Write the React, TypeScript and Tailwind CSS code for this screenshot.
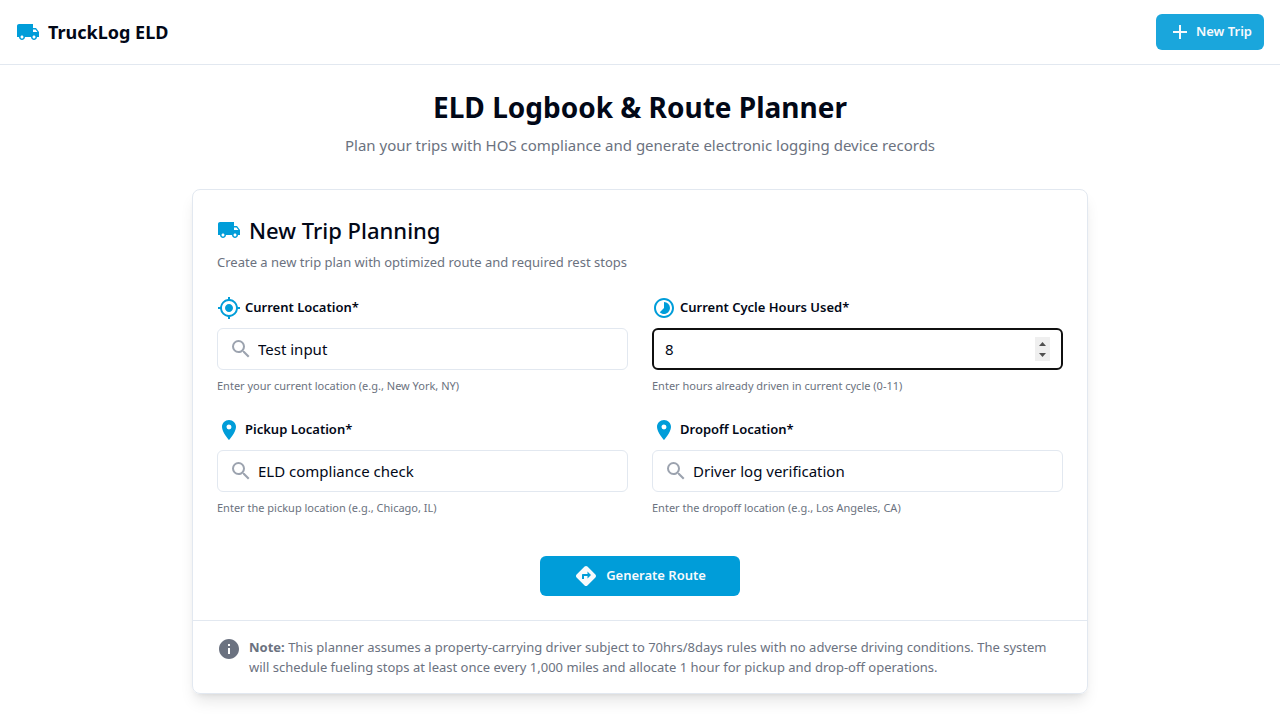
import { useState, type ReactNode } from 'react';
import {
  MdAdd,
  MdDirections,
  MdInfo,
  MdLocalShipping,
  MdLocationOn,
  MdMyLocation,
  MdSearch,
  MdTimelapse,
} from 'react-icons/md';

type FieldProps = {
  id: string;
  label: string;
  hint: string;
  icon: ReactNode;
  children: ReactNode;
};

function Field({ id, label, hint, icon, children }: FieldProps) {
  return (
    <div className="flex flex-col gap-2">
      <label htmlFor={id} className="flex h-6 items-center gap-1 text-[13px] font-semibold">
        {icon}
        {label}
      </label>
      {children}
      <p id={`${id}-hint`} className="text-[11px] leading-4 text-[#6b7280]">
        {hint}
      </p>
    </div>
  );
}

type TextInputProps = {
  id: string;
  value: string;
  onChange: (value: string) => void;
};

function SearchInput({ id, value, onChange }: TextInputProps) {
  return (
    <div className="flex items-center gap-[5px] rounded-md border border-[#e2e8f0] pr-3 pl-[11px]">
      <MdSearch className="size-6 shrink-0 text-[#9ca3af]" aria-hidden="true" />
      <input
        id={id}
        type="text"
        value={value}
        aria-describedby={`${id}-hint`}
        onChange={(e) => onChange(e.target.value)}
        className="h-10 w-full min-w-0 bg-transparent text-[15px] outline-none"
      />
    </div>
  );
}

function HoursInput({ id, value, onChange }: TextInputProps) {
  const step = (delta: number) => onChange(String(Math.min(11, Math.max(0, Number(value) + delta))));

  return (
    <div className="flex items-center rounded-md border-2 border-[#101010] px-[11px]">
      <input
        id={id}
        type="number"
        min="0"
        max="11"
        value={value}
        aria-describedby={`${id}-hint`}
        onChange={(e) => onChange(e.target.value)}
        className="h-[38px] w-full min-w-0 bg-transparent text-[15px] outline-none [&::-webkit-inner-spin-button]:appearance-none"
      />
      <div className="flex h-6 w-[15px] shrink-0 flex-col bg-[#efefef] text-[#505050]">
        <button
          type="button"
          aria-label="Increase hours"
          onClick={() => step(1)}
          className="flex h-3 items-end justify-center pb-[3px]"
        >
          <svg viewBox="0 0 7 4" className="h-1 w-[7px]" aria-hidden="true">
            <path d="M3.5 0L7 4H0z" fill="currentColor" />
          </svg>
        </button>
        <button
          type="button"
          aria-label="Decrease hours"
          onClick={() => step(-1)}
          className="flex h-3 items-start justify-center pt-1"
        >
          <svg viewBox="0 0 7 4" className="h-1 w-[7px]" aria-hidden="true">
            <path d="M0 0H7L3.5 4z" fill="currentColor" />
          </svg>
        </button>
      </div>
    </div>
  );
}

export default function App() {
  const [current, setCurrent] = useState('Test input');
  const [hours, setHours] = useState('8');
  const [pickup, setPickup] = useState('ELD compliance check');
  const [dropoff, setDropoff] = useState('Driver log verification');

  return (
    <div className="min-h-screen bg-white font-['Noto_Sans','Open_Sans',sans-serif] text-[#020817]">
      <header className="border-b border-[#e2e8f0]">
        <div className="flex h-16 items-center justify-between px-4">
          <div className="flex items-center gap-2">
            <MdLocalShipping className="size-6 text-[#009dd9]" aria-hidden="true" />
            <span className="text-[18px] leading-7 font-bold">TruckLog ELD</span>
          </div>
          <button
            type="button"
            className="flex h-9 items-center gap-1 rounded-md bg-[#1aa6dc] px-3 text-[13px] font-semibold text-[#f8fafc]"
          >
            <MdAdd className="size-6" aria-hidden="true" />
            New Trip
          </button>
        </div>
      </header>

      <main className="mx-auto max-w-4xl py-6">
        <div className="mb-8 text-center">
          <h1 className="text-[28px] leading-9 font-bold">ELD Logbook &amp; Route Planner</h1>
          <p className="mt-2 text-[15px] leading-6 text-[#6b7280]">
            Plan your trips with HOS compliance and generate electronic logging device records
          </p>
        </div>

        <section className="rounded-lg border border-[#e2e8f0] shadow-lg">
          <div className="p-6">
            <h2 className="flex items-center gap-2 text-[22px] leading-8 font-medium">
              <MdLocalShipping className="size-6 text-[#009dd9]" aria-hidden="true" />
              New Trip Planning
            </h2>
            <p className="mt-1.5 text-[13px] leading-5 text-[#6b7280]">
              Create a new trip plan with optimized route and required rest stops
            </p>
          </div>

          <form className="px-6 pb-6" onSubmit={(e) => e.preventDefault()}>
            <div className="grid grid-cols-2 gap-6">
              <Field
                id="current-location"
                label="Current Location*"
                hint="Enter your current location (e.g., New York, NY)"
                icon={<MdMyLocation className="size-6 text-[#009dd9]" aria-hidden="true" />}
              >
                <SearchInput id="current-location" value={current} onChange={setCurrent} />
              </Field>
              <Field
                id="cycle-hours"
                label="Current Cycle Hours Used*"
                hint="Enter hours already driven in current cycle (0-11)"
                icon={<MdTimelapse className="size-6 text-[#009dd9]" aria-hidden="true" />}
              >
                <HoursInput id="cycle-hours" value={hours} onChange={setHours} />
              </Field>
              <Field
                id="pickup-location"
                label="Pickup Location*"
                hint="Enter the pickup location (e.g., Chicago, IL)"
                icon={<MdLocationOn className="size-6 text-[#009dd9]" aria-hidden="true" />}
              >
                <SearchInput id="pickup-location" value={pickup} onChange={setPickup} />
              </Field>
              <Field
                id="dropoff-location"
                label="Dropoff Location*"
                hint="Enter the dropoff location (e.g., Los Angeles, CA)"
                icon={<MdLocationOn className="size-6 text-[#009dd9]" aria-hidden="true" />}
              >
                <SearchInput id="dropoff-location" value={dropoff} onChange={setDropoff} />
              </Field>
            </div>
            <div className="mt-10 flex justify-center">
              <button
                type="submit"
                className="flex h-10 w-[200px] items-center justify-center gap-2 rounded-md bg-[#009dd9] text-[13px] font-semibold text-[#f8fafc]"
              >
                <MdDirections className="size-6" aria-hidden="true" />
                Generate Route
              </button>
            </div>
          </form>

          <div className="flex items-start gap-2 border-t border-[#e2e8f0] px-6 py-4 text-[13px] leading-5 text-[#6b7280]">
            <MdInfo className="size-6 shrink-0" aria-hidden="true" />
            <p>
              <strong className="font-bold">Note:</strong> This planner assumes a property-carrying driver subject to
              70hrs/8days rules with no adverse driving conditions. The system will schedule fueling stops at least
              once every 1,000 miles and allocate 1 hour for pickup and drop-off operations.
            </p>
          </div>
        </section>
      </main>
    </div>
  );
}
